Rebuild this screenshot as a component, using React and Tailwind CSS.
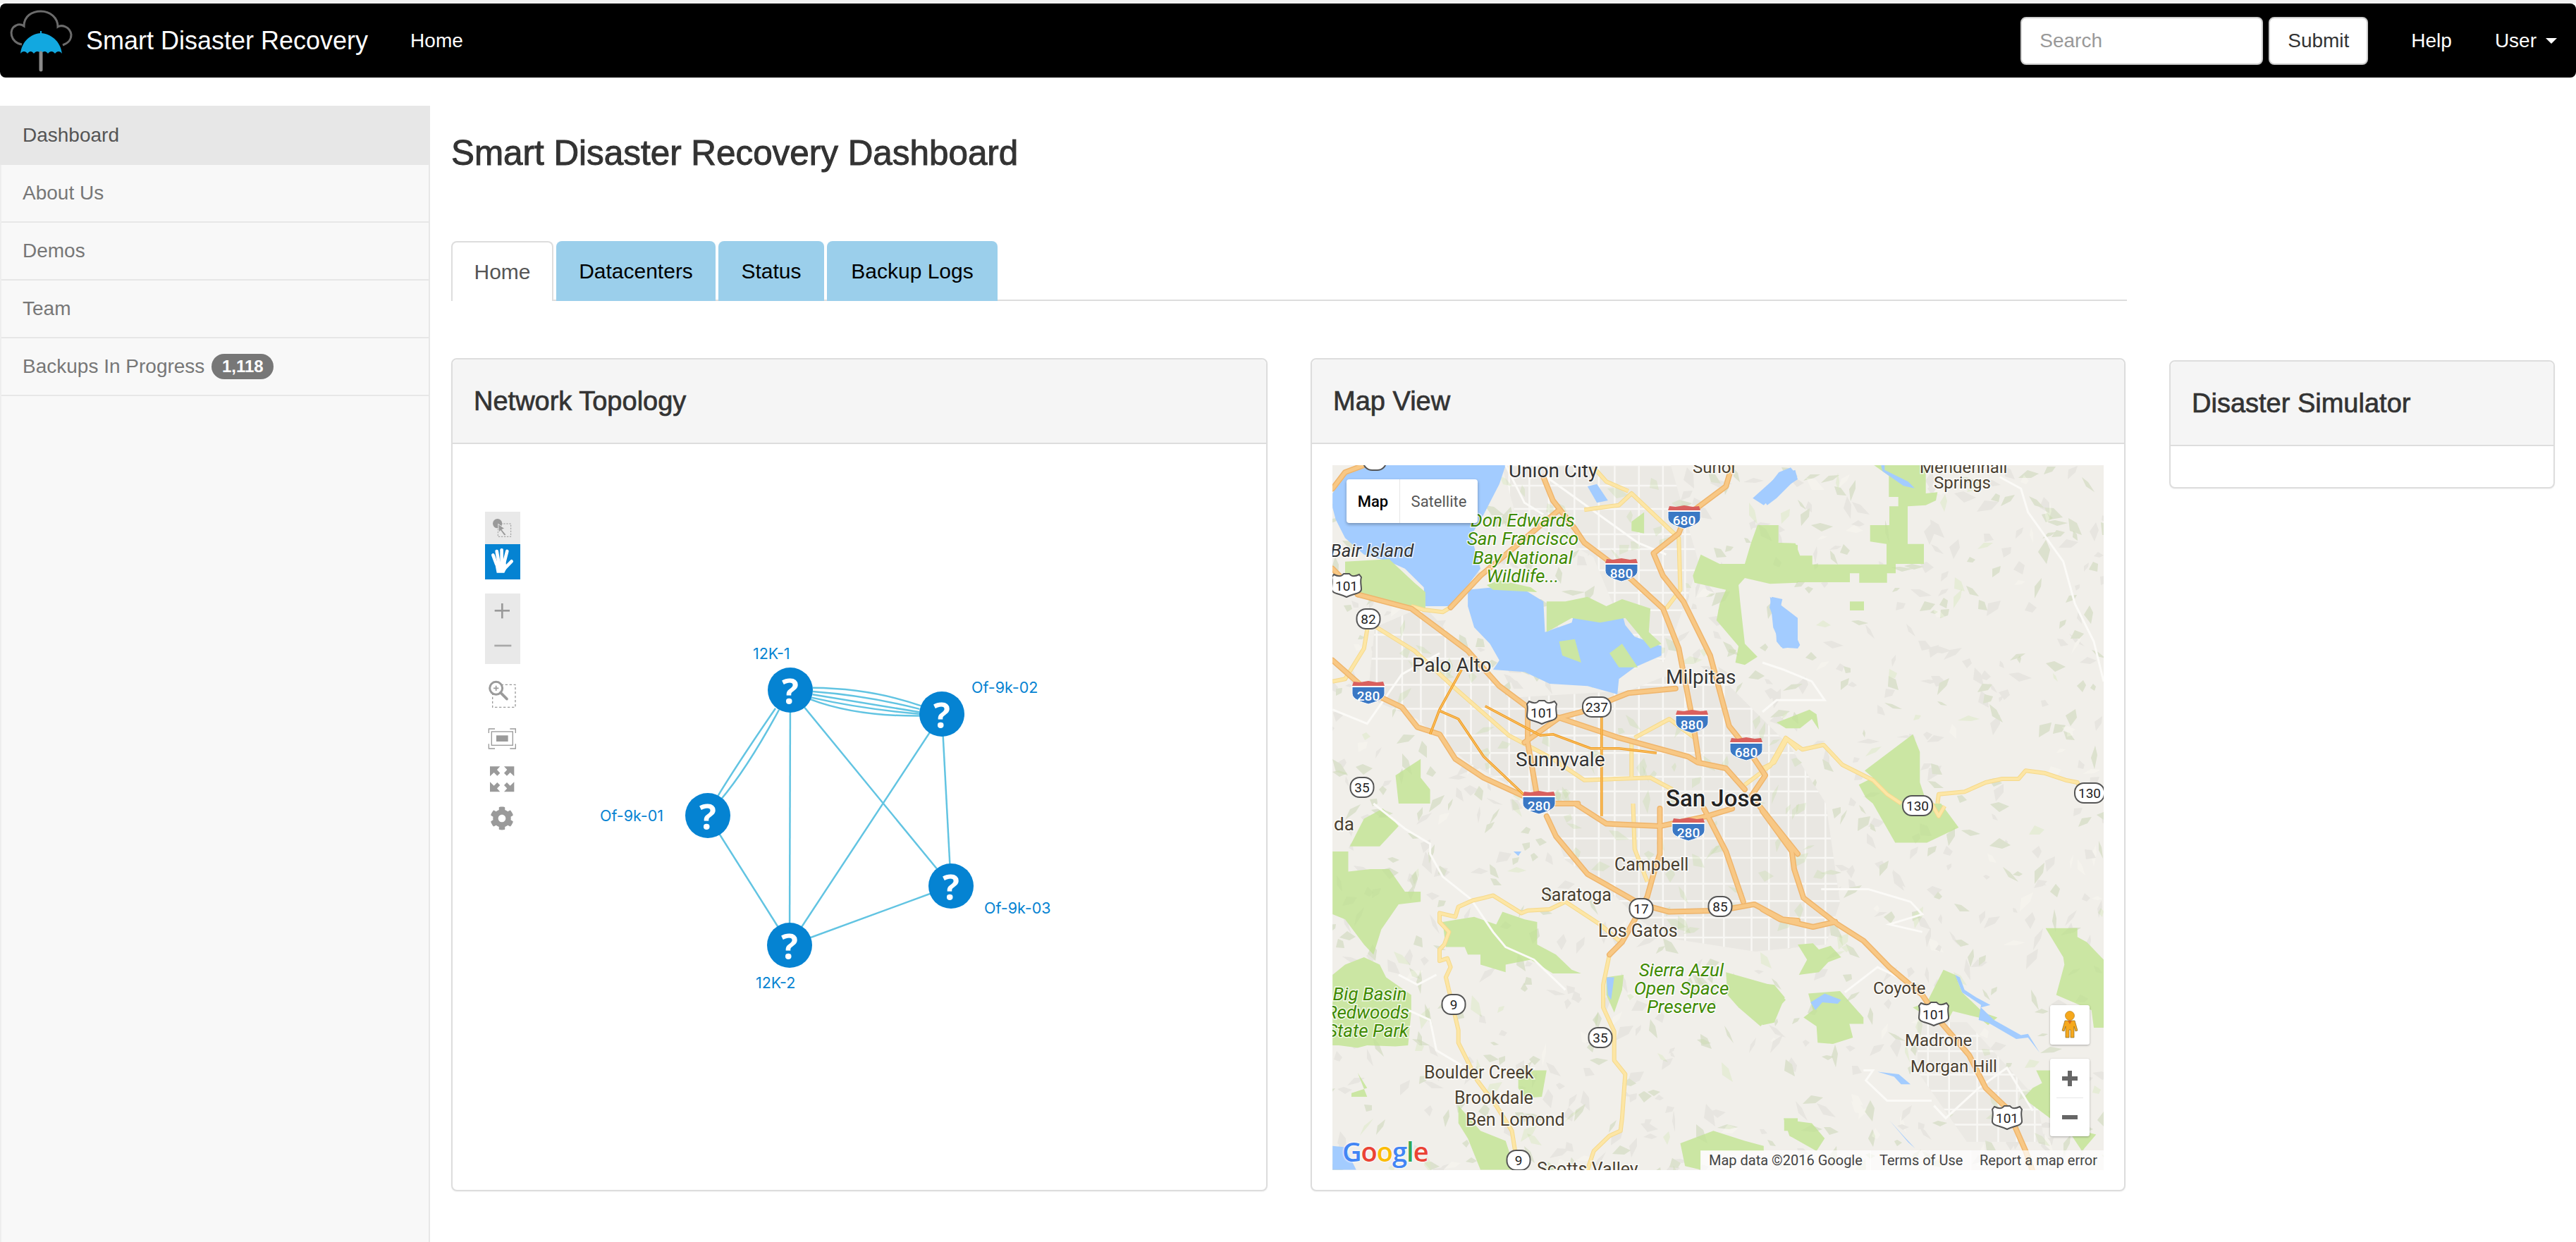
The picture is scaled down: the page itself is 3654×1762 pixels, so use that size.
import { FaCog } from "react-icons/fa";

// the zoom crops were not scaled evenly, so the map shapes are noted in crop coordinates and converted here
const toMap = (s, sx, ox, sy, oy) =>
    s
        .split(" ")
        .map((p) => {
            const [x, y] = p.split(",");
            return `${(x * sx + ox).toFixed(1)},${(y * sy + oy).toFixed(1)}`;
        })
        .join(" ");
const z6 = (s) => toMap(s, 1 / 2.24, -40, 1 / 3, -40);
const z7 = (s) => toMap(s, 1 / 2.24, -40, 1 / 2.8, 480);
const z8 = (s) => toMap(s, 1 / 3, 610, 1 / 3, -40);
const z9 = (s) => toMap(s, 1 / 3, 610, 1 / 2.8, 480);

const water = [
    z6("90,240 130,150 190,120 640,120 620,200 570,330 530,420 560,560 470,720 385,720 380,640 320,560 270,530 190,500 130,430 100,350 90,300"),
    z6("520,650 600,640 700,650 760,700 765,830 850,790 860,740 920,770 1010,750 1020,800 1050,850 1135,890 1135,930 1050,980 1000,1030 995,1095 900,1060 780,1050 700,1000 600,990 620,950 590,880 540,810 520,720"),
    z6("1425,260 1500,170 1560,140 1568,180 1500,240 1460,290"),
    z6("1480,680 1568,770 1568,890 1520,900 1490,810"),
    z6("900,210 930,200 965,270 930,280"),
    z7("90,1360 130,1365 165,1455 90,1455"),
    z7("960,690 985,690 975,780 965,760"),
    z7("665,190 690,190 680,208"),
    z8("0,240 70,150 120,130 145,160 135,185 60,260 20,290 0,260"),
    z8("505,120 520,120 520,140 620,190 648,218 600,208 510,145"),
    z8("40,680 85,690 70,755 120,760 135,830 160,885 150,900 80,895 60,870 55,790 30,725"),
    z9("820,680 840,690 860,740 910,770 970,800 930,810 985,860 1100,920 1130,915 1180,990 1130,930 1080,935 960,870 920,860 930,800 850,750"),
    z9("205,790 265,755 335,780 320,795 255,790 225,820"),
    z9("490,1065 580,1075 630,1115 590,1115 560,1085"),
    z9("540,1258 610,1330 650,1370 620,1345"),
];

// salt marsh sits on top of the bay
const marsh = [
    z6("130,530 270,520 350,620 385,660 385,730 340,720 220,690 130,640"),
    z6("770,700 830,700 900,680 960,720 1010,690 1100,730 1095,830 1135,880 1100,900 1020,770 940,790 850,770 770,830"),
    z6("810,870 860,860 880,960 820,930"),
    z6("970,920 1010,880 1060,980 1000,980"),
    z6("580,630 620,610 720,640 740,660 600,650"),
];

const parks = [
    z6("1260,500 1320,540 1400,540 1420,450 1440,375 1505,375 1505,450 1568,460 1568,620 1480,625 1400,600 1380,630 1385,700 1400,880 1440,935 1400,970 1370,960 1380,890 1310,780 1320,710 1340,650 1240,620 1235,590"),
    z6("1040,360 1080,320 1080,410 1040,400"),
    z6("290,1440 370,1370 370,1450 400,1500 400,1560 300,1560"),
    z7("90,190 140,190 140,270 210,260 270,260 320,350 370,350 370,390 300,400 245,500 220,600 190,560 130,460 90,440"),
    z7("145,170 190,60 250,20 300,90 240,170"),
    z7("90,680 130,640 190,610 240,640 260,690 340,760 340,830 330,960 290,965 200,960 170,970 110,960 90,960"),
    z7("440,470 490,460 540,450 610,480 630,430 700,460 740,470 740,560 800,600 850,660 880,675 790,675 720,620 640,640 640,670 560,640 560,600 520,600 510,570 450,570"),
    z7("1340,670 1480,720 1530,780 1450,885 1380,810 1345,760"),
    z7("960,690 1015,680 1010,740 985,830 960,760"),
    z7("680,1060 770,1060 755,1165 700,1170 680,1130"),
    z7("490,1200 560,1300 640,1340 670,1455 560,1455 520,1330 490,1270"),
    z7("1195,1350 1300,1300 1400,1340 1460,1360 1460,1380 1260,1380 1260,1455 1210,1440"),
    z7("1525,1250 1568,1250 1568,1300 1525,1300"),
    z7("150,1150 200,1130 170,1070 200,1165 150,1165"),
    z8("475,120 695,120 695,240 745,235 738,270 695,290 618,295 618,455 687,455 687,540 567,540 567,580 530,580 530,620 412,620 412,580 372,580 372,618 100,618 0,612 0,375 68,375 68,450 140,452 160,505 212,505 212,542 528,542 528,455 458,445 458,375 540,375 540,295 578,295 578,255 538,255 538,165"),
    z8("372,700 432,700 432,738 372,738"),
    z8("640,1265 670,1340 670,1470 700,1560 470,1560 440,1535 410,1480 470,1450 435,1420"),
    z8("60,1215 200,1160 230,1180 240,1245 210,1200 160,1240 100,1240"),
    z9("470,0 760,0 835,95 700,155 565,155"),
    z9("150,560 215,555 240,580 290,565 335,610 280,630 240,670 155,680 190,620"),
    z9("0,715 50,720 95,770 50,870 0,880"),
    z9("195,755 330,745 430,850 430,875 370,875 385,930 300,955 235,950 230,885 175,850 215,820"),
    z9("1205,495 1340,495 1340,530 1380,550 1452,620 1452,890 1410,890 1400,820 1250,760 1285,640 1280,610"),
    z9("1165,1060 1230,1060 1230,1270 1420,1315 1360,1380 1310,1310 1110,1170 1150,1130 1190,1110"),
    z9("90,1250 130,1260 210,1270 265,1330 230,1380 115,1320"),
    z9("770,660 820,680 850,750 940,830 1000,850 960,880 920,850 810,825 790,860 690,840 640,810 700,790"),
];

const highways = [
    z6("1360,120 1340,210 1210,340 1190,410 1110,495 1140,590 1205,700 1290,930 1350,1230 1410,1330 1465,1440 1420,1530"),
    z6("760,170 790,270 860,390 890,450 1010,570 1140,730 1190,900 1235,1210 1255,1385"),
    z6("170,670 340,730 520,910 620,1060 710,1150 810,1195 1000,1280 1220,1360 1250,1385 1340,1410 1400,1500"),
    z6("90,950 200,1080 310,1150 360,1235 430,1265 480,1370 570,1450 700,1530 760,1560 870,1560"),
    z6("1180,1070 1030,1090 880,1170 810,1195 700,1300"),
    z6("90,220 130,150 190,120"),
    z6("90,560 170,670"),
    z6("465,725 560,590 810,310"),
    z6("710,1150 710,1300 740,1530"),
    z7("770,50 800,130 900,280 1070,400 1160,430 1320,425 1430,400 1520,460 1568,465"),
    z7("860,0 960,80 1130,90 1280,50 1360,20"),
    z7("1130,20 1130,200 1110,280 1090,370 1060,440 1010,550 970,600"),
    z7("1270,20 1340,190 1395,390"),
    z7("1440,0 1568,200"),
    z9("0,30 125,190 135,260 175,375 320,480 430,545 540,650 680,760 760,870 880,1000 950,1130 1040,1210 1120,1380 1150,1460"),
    z9("0,420 75,460 215,490 310,470"),
];

const yellowRoads = [
    z6("890,310 1000,290 1040,240 1190,430 1195,650 1150,730"),
    z6("1030,230 960,190 920,130"),
    z6("90,1040 130,1030 190,900 205,780"),
    z6("230,810 350,910 480,1070 650,1270 790,1370 890,1460 1100,1450 1170,1500"),
    z6("1050,1280 1160,1200 1240,1280"),
    z6("1040,1450 1040,1290"),
    z6("340,720 380,735 440,745 465,725"),
    z6("1400,1480 1480,1400 1530,1280 1568,1330"),
    z7("970,600 950,720 950,810 985,905 985,1020 1020,1075 1010,1250 1005,1300 970,1320 920,1380 900,1455"),
    z7("830,390 940,480 1005,550"),
    z7("830,390 780,420 710,425 690,435 600,365 570,375 535,385 490,410 480,450 430,435 430,470 460,510 445,560 430,580 430,625 455,615 465,650 450,690 490,900 490,950 550,1100 610,1200 660,1300 670,1380"),
    z7("1045,0 1050,180 1090,310"),
    z8("0,1410 50,1385 105,1285 170,1330 260,1310 340,1395 470,1460 530,1520 590,1560"),
    z8("745,1560 750,1520 860,1510 950,1470 1020,1455 1090,1455 1120,1420 1200,1430 1290,1460 1340,1470 1360,1510"),
    z9("720,0 750,50 775,10"),
];

const expressways = [
    z6("500,990 430,1160 400,1265"),
    z6("430,1165 490,1200 570,1360 700,1525"),
    z6("575,1145 750,1270 790,1265 910,1325 1000,1325 1120,1345"),
    z6("945,1190 945,1560"),
    z7("945,0 945,50"),
];

const whiteRoads = [
    z7("220,0 320,100 400,160 400,200 440,290 530,380 600,510 640,570 730,620 830,740"),
    z7("300,680 360,720 420,680"),
    z7("330,820 400,860 420,980 500,1040"),
    z6("90,1160 200,1220 310,1010 430,920"),
    z6("770,170 1060,450 1150,500"),
    z6("640,120 700,280 760,330"),
    z8("1010,170 1100,220 1130,320 1280,530 1330,710 1410,870 1452,1040"),
    z8("0,960 90,990 210,1040 265,1120 60,1120 0,1170"),
    z9("250,340 450,340 630,390 680,440 540,480 680,510"),
    z9("350,750 490,650 600,700"),
    z9("430,1060 470,1060 440,1100 530,1180 720,1180"),
    z9("730,1200 780,1250 920,1130 1040,1050 1150,1220"),
];

const urbanA = "60,230 130,200 250,330 420,320 470,300 560,310 650,400 700,480 720,620 700,680 600,690 470,670 430,640 390,600 330,560 300,480 190,420 120,360 50,330";
const urbanB = "240,0 480,0 520,140 470,280 420,250 370,130 260,70";
const urbanC = "830,790 900,790 1000,900 1010,960 900,960 830,860";

// hill shading scattered over the terrain
const rnd = (() => {
    let s = 91;
    return () => {
        s = (s * 16807) % 2147483647;
        return s / 2147483647;
    };
})();
const flecks = Array.from({ length: 1100 }, () => {
    const x = rnd() * 1094;
    const y = rnd() * 1000;
    const len = 10 + rnd() * 24;
    const wid = 3 + rnd() * 8;
    const ang = rnd() * Math.PI;
    const dx = Math.cos(ang);
    const dy = Math.sin(ang);
    return [
        [x, y],
        [x + dx * len * 0.5 - dy * wid, y + dy * len * 0.5 + dx * wid],
        [x + dx * len, y + dy * len],
        [x + dx * len * 0.4 + dy * wid * 0.5, y + dy * len * 0.4 - dx * wid * 0.5],
    ]
        .map(([a, b]) => `${a.toFixed(0)},${b.toFixed(0)}`)
        .join(" ");
});

const gridLines = [];
let gy = 0;
while (gy < 1000) {
    gridLines.push([0, gy, 1094, gy]);
    gy += 20 + rnd() * 18;
}
let gx = 0;
while (gx < 1094) {
    gridLines.push([gx, 0, gx, 1000]);
    gx += 20 + rnd() * 20;
}

const mapLabels = [
    ["Union City", 250, 7, 28, "start", "#333", false, 400],
    ["Sunol", 511, 3, 24, "start", "#4a4030", false, 400],
    ["Mendenhall", 833, 3, 24, "start", "#4a4030", false, 400],
    ["Springs", 853, 25, 24, "start", "#4a4030", false, 400],
    ["Don Edwards", 270, 78, 26, "middle", "#3f8a02", true, 400],
    ["San Francisco", 270, 104, 26, "middle", "#3f8a02", true, 400],
    ["Bay National", 270, 131, 26, "middle", "#3f8a02", true, 400],
    ["Wildlife...", 270, 157, 26, "middle", "#3f8a02", true, 400],
    ["Bair Island", -3, 121, 26, "start", "#333", true, 400],
    ["Palo Alto", 113, 283, 28, "start", "#333", false, 400],
    ["Milpitas", 473, 300, 28, "start", "#333", false, 400],
    ["Sunnyvale", 260, 417, 28, "start", "#333", false, 400],
    ["San Jose", 473, 472, 33, "start", "#222", false, 500],
    ["da", 2, 509, 26, "start", "#4a4030", false, 400],
    ["Campbell", 400, 566, 25, "start", "#4a4030", false, 400],
    ["Saratoga", 296, 609, 25, "start", "#4a4030", false, 400],
    ["Los Gatos", 377, 660, 25, "start", "#4a4030", false, 400],
    ["Sierra Azul", 495, 716, 26, "middle", "#3f8a02", true, 400],
    ["Open Space", 495, 742, 26, "middle", "#3f8a02", true, 400],
    ["Preserve", 495, 768, 26, "middle", "#3f8a02", true, 400],
    ["Big Basin", 53, 750, 26, "middle", "#3f8a02", true, 400],
    ["Redwoods", 50, 776, 26, "middle", "#3f8a02", true, 400],
    ["State Park", 50, 802, 26, "middle", "#3f8a02", true, 400],
    ["Boulder Creek", 130, 861, 25, "start", "#4a4030", false, 400],
    ["Brookdale", 173, 897, 25, "start", "#4a4030", false, 400],
    ["Ben Lomond", 189, 928, 25, "start", "#4a4030", false, 400],
    ["Scotts Valley", 290, 998, 25, "start", "#4a4030", false, 400],
    ["Coyote", 767, 742, 24, "start", "#4a4030", false, 400],
    ["Madrone", 812, 816, 24, "start", "#4a4030", false, 400],
    ["Morgan Hill", 820, 853, 24, "start", "#4a4030", false, 400],
];

const interstates = [
    ["680", 499, 73],
    ["880", 410, 148],
    ["280", 51, 322],
    ["880", 510, 363],
    ["680", 587, 402],
    ["280", 293, 478],
    ["280", 505, 516],
];
const usRoutes = [
    ["101", 20, 170],
    ["101", 297, 350],
    ["101", 853, 778],
    ["101", 957, 925],
];
const stateRoutes = [
    ["82", 51, 218, 33],
    ["237", 375, 343, 40],
    ["35", 42, 457, 33],
    ["17", 438, 629, 33],
    ["85", 550, 626, 33],
    ["9", 172, 765, 33],
    ["35", 380, 812, 33],
    ["9", 264, 986, 33],
    ["130", 830, 483, 42],
    ["130", 1074, 465, 42],
    ["72", 60, -7, 33],
];

const roboto = "font-['Roboto',sans-serif]";

const InterstateShield = ({ label, x, y }) => (
    <g transform={`translate(${x} ${y})`}>
        <path d="M-23,-9 L23,-9 L23,2 C23,10 10,14 0,17 C-10,14 -23,10 -23,2 Z" fill="#3b78c4" stroke="#fff" strokeWidth="1" />
        <path d="M-23,-9 L-21,-15 L-12,-14 L0,-16 L12,-14 L21,-15 L23,-9 Z" fill="#d9605e" />
        <rect x="-23" y="-9" width="46" height="2" fill="#fff" />
        <text x="0" y="5" textAnchor="middle" dominantBaseline="central" fontSize="19" fontWeight="500" fill="#fff" className={roboto}>
            {label}
        </text>
    </g>
);

const UsShield = ({ label, x, y }) => (
    <g transform={`translate(${x} ${y})`}>
        <path d="M-18,-15 C-12,-12 -7,-12 -4,-16 L4,-16 C7,-12 12,-12 18,-15 L21,-11 C19,-5 21,0 21,6 C21,12 10,12 0,17 C-10,12 -21,12 -21,6 C-21,0 -19,-5 -21,-11 Z" fill="#fff" stroke="#555" strokeWidth="2" />
        <text x="0" y="1" textAnchor="middle" dominantBaseline="central" fontSize="19" fill="#222" className={roboto}>
            {label}
        </text>
    </g>
);

const StateShield = ({ label, x, y, w }) => (
    <g transform={`translate(${x} ${y})`}>
        <rect x={-w / 2} y="-14" width={w} height="28" rx="13" fill="#fff" stroke="#555" strokeWidth="2" />
        <text x="0" y="0" textAnchor="middle" dominantBaseline="central" fontSize="19" fill="#222" className={roboto}>
            {label}
        </text>
    </g>
);

const MapDrawing = () => (
    <svg width="1094" height="1000" viewBox="0 0 1094 1000" className="block">
        <defs>
            <clipPath id="urban-clip">
                <polygon points={urbanA} />
                <polygon points={urbanB} />
                <polygon points={urbanC} />
            </clipPath>
        </defs>
        <rect width="1094" height="1000" fill="#f1efea" />
        {flecks.map((f, i) => (
            <polygon key={i} points={f} fill={i % 6 === 0 ? "#f5f3ed" : "#e7e5e0"} />
        ))}
        <polygon points={urbanA} fill="#e9e7e2" />
        <polygon points={urbanB} fill="#ebe9e4" />
        <polygon points={urbanC} fill="#ebe9e4" />
        <g clipPath="url(#urban-clip)" stroke="#f8f7f4" strokeWidth="2.5">
            {gridLines.map(([x1, y1, x2, y2], i) => (
                <line key={i} x1={x1} y1={y1} x2={x2} y2={y2} />
            ))}
        </g>
        {parks.map((p, i) => (
            <polygon key={i} points={p} fill="#cbe6a3" />
        ))}
        {flecks.slice(0, 500).map((f, i) => (
            <polygon key={i} points={f} fill="#bcd996" opacity="0.25" />
        ))}
        {water.map((p, i) => (
            <polygon key={i} points={p} fill="#a3ccff" />
        ))}
        {marsh.map((p, i) => (
            <polygon key={i} points={p} fill="#cbe6a3" />
        ))}
        {whiteRoads.map((p, i) => (
            <polyline key={i} points={p} fill="none" stroke="#fbfaf7" strokeWidth="3" />
        ))}
        {yellowRoads.map((p, i) => (
            <polyline key={i} points={p} fill="none" stroke="#f5d98c" strokeWidth="6" strokeLinejoin="round" />
        ))}
        {yellowRoads.map((p, i) => (
            <polyline key={i} points={p} fill="none" stroke="#fde6a5" strokeWidth="4" strokeLinejoin="round" />
        ))}
        {highways.map((p, i) => (
            <polyline key={i} points={p} fill="none" stroke="#efb56c" strokeWidth="8" strokeLinejoin="round" strokeLinecap="round" />
        ))}
        {highways.map((p, i) => (
            <polyline key={i} points={p} fill="none" stroke="#f8c885" strokeWidth="5" strokeLinejoin="round" strokeLinecap="round" />
        ))}
        {expressways.map((p, i) => (
            <polyline key={i} points={p} fill="none" stroke="#f09c20" strokeWidth="3.5" strokeLinejoin="round" />
        ))}
        {expressways.map((p, i) => (
            <polyline key={i} points={p} fill="none" stroke="#fcc56e" strokeWidth="1.2" strokeLinejoin="round" />
        ))}
        {mapLabels.map(([text, x, y, size, anchor, color, italic, weight]) => (
            <text
                key={text + x}
                x={x}
                y={y}
                fontSize={size}
                textAnchor={anchor}
                dominantBaseline="central"
                fill={color}
                fontStyle={italic ? "italic" : "normal"}
                fontWeight={weight}
                stroke="#fff"
                strokeOpacity="0.75"
                strokeWidth="3"
                className={`${roboto} [paint-order:stroke]`}
            >
                {text}
            </text>
        ))}
        {interstates.map(([l, x, y]) => (
            <InterstateShield key={l + x} label={l} x={x} y={y} />
        ))}
        {usRoutes.map(([l, x, y]) => (
            <UsShield key={l + x} label={l} x={x} y={y} />
        ))}
        {stateRoutes.map(([l, x, y, w]) => (
            <StateShield key={l + x} label={l} x={x} y={y} w={w} />
        ))}
    </svg>
);

const MapView = () => (
    <div className="relative w-[1094px] h-[1000px] overflow-hidden">
        <MapDrawing />
        <div className={`absolute left-[20px] top-[20px] flex h-[62px] w-[186px] rounded-[4px] bg-white text-[22px] shadow-[0_2px_4px_rgba(0,0,0,0.3)] ${roboto}`}>
            <div className="flex w-[76px] items-center justify-center border-r border-[#e6e6e6] font-medium text-black">Map</div>
            <div className="flex flex-1 items-center justify-center text-[#565656]">Satellite</div>
        </div>
        <div className="absolute left-[14px] top-[951px] font-['Open_Sans',sans-serif] text-[38px] font-semibold leading-[44px] tracking-[-1px] [text-shadow:0_0_3px_#fff,0_0_3px_#fff]">
            <span className="text-[#4285f4]">G</span>
            <span className="text-[#ea4335]">o</span>
            <span className="text-[#fbbc05]">o</span>
            <span className="text-[#4285f4]">g</span>
            <span className="text-[#34a853]">l</span>
            <span className="text-[#ea4335]">e</span>
        </div>
        <div className="absolute left-[1018px] top-[766px] flex h-[56px] w-[56px] items-center justify-center rounded-[3px] bg-white shadow-[0_1px_3px_rgba(0,0,0,0.3)]">
            <svg width="24" height="40" viewBox="0 0 24 40">
                <circle cx="12" cy="7" r="6.5" fill="#f6a81c" stroke="#a97512" strokeWidth="0.6" />
                <path d="M5,14 L19,14 L23,28 L20,29 L18,22 L18,38 L13,38 L13,27 L11,27 L11,38 L6,38 L6,22 L4,29 L1,28 Z" fill="#f6a81c" stroke="#8a6a20" strokeWidth="0.7" />
                <path d="M9,14 L15,14 L12,19 Z" fill="#d9691a" />
            </svg>
        </div>
        <div className="absolute left-[1018px] top-[842px] flex h-[110px] w-[56px] flex-col items-center rounded-[3px] bg-white shadow-[0_1px_3px_rgba(0,0,0,0.3)]">
            <div className="flex h-[55px] items-center justify-center">
                <svg width="22" height="22" viewBox="0 0 22 22">
                    <path d="M8,0 H14 V8 H22 V14 H14 V22 H8 V14 H0 V8 H8 Z" fill="#666" />
                </svg>
            </div>
            <div className="h-px w-[38px] bg-[#e6e6e6]" />
            <div className="flex h-[54px] items-center justify-center">
                <div className="h-[6px] w-[22px] bg-[#666]" />
            </div>
        </div>
        <div className={`absolute bottom-0 right-0 flex h-[28px] w-[572px] items-center bg-white/70 text-[20px] text-[#444] ${roboto}`}>
            <span className="ml-[12px] w-[229px] whitespace-nowrap">Map data ©2016 Google</span>
            <span className="h-full w-px bg-white/80" />
            <span className="ml-[12px] w-[129px] whitespace-nowrap">Terms of Use</span>
            <span className="h-full w-px bg-white/80" />
            <span className="ml-[12px] whitespace-nowrap">Report a map error</span>
        </div>
    </div>
);

const nodes = [
    { x: 1121, y: 979, label: "12K-1", lx: 1068, ly: 927 },
    { x: 1336, y: 1013, label: "Of-9k-02", lx: 1378, ly: 975 },
    { x: 1004, y: 1157, label: "Of-9k-01", lx: 851, ly: 1157 },
    { x: 1349, y: 1257, label: "Of-9k-03", lx: 1396, ly: 1288 },
    { x: 1120, y: 1341, label: "12K-2", lx: 1072, ly: 1394 },
];
const links = [
    [0, 4],
    [0, 3],
    [1, 4],
    [1, 3],
    [2, 4],
    [4, 3],
];

const Toolbar = () => (
    <g transform="translate(660 700) scale(0.3333)">
        <rect x="84" y="78" width="150" height="138" fill="#e9e9e9" />
        <circle cx="137" cy="128" r="20" fill="#9a9a9a" />
        <rect x="139" y="129" width="55" height="55" fill="none" stroke="#9a9a9a" strokeWidth="3" strokeDasharray="7 5" />
        <path d="M140,130 L168,150 L156,154 L174,176 L166,180 L150,158 L142,166 Z" fill="#9a9a9a" stroke="#e9e9e9" strokeWidth="3" />
        <rect x="84" y="216" width="150" height="150" fill="#0583d2" />
        <g stroke="#fff" strokeWidth="14" strokeLinecap="round">
            <line x1="118" y1="262" x2="132" y2="300" />
            <line x1="134" y1="246" x2="142" y2="292" />
            <line x1="155" y1="241" x2="155" y2="292" />
            <line x1="178" y1="246" x2="166" y2="292" />
            <line x1="197" y1="289" x2="165" y2="322" />
        </g>
        <path d="M125,290 L172,290 L176,318 L166,338 L134,338 Z" fill="#fff" />
        <rect x="84" y="426" width="150" height="300" fill="#e9e9e9" />
        <rect x="125" y="495" width="64" height="8" fill="#9a9a9a" />
        <rect x="153" y="468" width="8" height="64" fill="#9a9a9a" />
        <rect x="124" y="644" width="72" height="8" fill="#a8a8a8" />
        <rect x="116" y="814" width="97" height="96" fill="none" stroke="#9a9a9a" strokeWidth="4" strokeDasharray="10 8" />
        <circle cx="131" cy="829" r="27" fill="#fff" stroke="#9a9a9a" strokeWidth="9" />
        <line x1="150" y1="848" x2="177" y2="875" stroke="#9a9a9a" strokeWidth="11" strokeLinecap="round" />
        <path d="M120,829 H142 M131,818 V840" stroke="#9a9a9a" strokeWidth="5" />
        <path d="M100,1020 V1002 H126 M190,1002 H214 V1020 M100,1066 V1086 H126 M190,1086 H214 V1066" fill="none" stroke="#9a9a9a" strokeWidth="4" />
        <rect x="112" y="1014" width="90" height="58" fill="none" stroke="#9a9a9a" strokeWidth="4" />
        <rect x="132" y="1030" width="50" height="26" fill="#9a9a9a" />
        <g fill="#9a9a9a">
            <polygon points="105,1162 148,1162 135,1176 148,1190 136,1202 122,1188 105,1204" />
            <polygon points="208,1162 165,1162 178,1176 165,1190 177,1202 191,1188 208,1204" />
            <polygon points="105,1270 148,1270 135,1256 148,1242 136,1230 122,1244 105,1228" />
            <polygon points="208,1270 165,1270 178,1256 165,1242 177,1230 191,1244 208,1228" />
        </g>
    </g>
);

const Topology = () => (
    <svg width="1154" height="1058" viewBox="642 630 1154 1058" className="block">
        <Toolbar />
        <FaCog x="695" y="1144" size={34} color="#9a9a9a" />
        <g stroke="#62c4e2" strokeWidth="2.5" fill="none">
            {links.map(([a, b]) => (
                <line key={`${a}-${b}`} x1={nodes[a].x} y1={nodes[a].y} x2={nodes[b].x} y2={nodes[b].y} />
            ))}
            <path d="M1100,1005 Q1045,1085 1016,1133" />
            <path d="M1105,1007 Q1060,1090 1022,1135" />
            <g transform="translate(820 880) scale(0.4464 0.3448)">
                <path vectorEffect="non-scaling-stroke" d="M745,278 Q930,280 1090,352" />
                <path vectorEffect="non-scaling-stroke" d="M745,293 Q920,310 1085,365" />
                <path vectorEffect="non-scaling-stroke" d="M745,305 Q910,340 1085,378" />
                <path vectorEffect="non-scaling-stroke" d="M742,318 Q900,365 1085,385" />
                <path vectorEffect="non-scaling-stroke" d="M738,325 Q880,395 1085,393" />
            </g>
        </g>
        {nodes.map((n) => (
            <g key={n.label}>
                <circle cx={n.x} cy={n.y} r="32" fill="#0583d2" />
                <text x={n.x} y={n.y + 1} textAnchor="middle" dominantBaseline="central" fontSize="50" fontWeight="700" fill="#fff" className="font-['Open_Sans',sans-serif]">
                    ?
                </text>
                <text x={n.lx} y={n.ly} dominantBaseline="central" fontSize="21.5" fill="#0583d2" className="font-['Inter',sans-serif]">
                    {n.label}
                </text>
            </g>
        ))}
    </svg>
);

const Panel = ({ title, className, children }) => (
    <div className={`rounded-lg border-2 border-[#dddddd] bg-white shadow-[0_1px_2px_rgba(0,0,0,0.05)] ${className}`}>
        <div className="flex h-[120px] items-center rounded-t-lg border-b-2 border-[#dddddd] bg-[#f5f5f5] pl-[30px] text-[38px] text-[#333] [-webkit-text-stroke:0.7px]">
            {title}
        </div>
        {children}
    </div>
);

const sideItems = ["About Us", "Demos", "Team"];

export default function App() {
    return (
        <div className="min-h-[1762px] border-t-[5px] border-[#f1f1f1] bg-white font-['Liberation_Sans',Arial,sans-serif] text-[28px] text-[#333]">
            <nav className="flex h-[105px] items-center rounded-lg bg-black pr-[27px] text-white">
                <svg width="90" height="88" viewBox="0 0 90 88" className="ml-[13px] shrink-0">
                    <g transform="translate(-12 -15)">
                        <path d="M30,64 C14,62 10,42 22,37 C26,35 30,36 33,38 C33,24 44,17 57,17 C70,17 81,26 81,39 C86,36 98,38 100,50 C100,58 96,62 88,65" fill="none" stroke="#6b6b6b" strokeWidth="3" />
                        <path d="M28,77 C30,60 42,49 57,48 C72,49 85,60 87,77 C84,73 80,73 77,77 C74,73 70,73 67,77 C64,73 61,73 57,77 C54,73 50,73 47,77 C44,73 41,73 38,77 C35,73 31,73 28,77 Z" fill="#12a8e0" />
                        <rect x="56" y="45" width="2" height="5" fill="#12a8e0" />
                        <line x1="57" y1="76" x2="57" y2="100" stroke="#8a8a8a" strokeWidth="5" strokeLinecap="round" />
                    </g>
                </svg>
                <span className="ml-[19px] whitespace-nowrap text-[36px]">Smart Disaster Recovery</span>
                <a className="ml-[60px]">Home</a>
                <div className="ml-auto flex items-center">
                    <input
                        placeholder="Search"
                        className="h-[68px] w-[344px] rounded-lg border-2 border-[#cccccc] bg-white pl-[25px] text-[#333] outline-none placeholder:text-[#999]"
                    />
                    <button className="ml-[8px] h-[68px] w-[141px] rounded-lg border-2 border-[#cccccc] bg-white text-[#333]">Submit</button>
                    <a className="ml-[61px]">Help</a>
                    <a className="ml-[61px]">User</a>
                    <span className="ml-[13px] h-0 w-0 border-x-[8px] border-t-[8px] border-x-transparent border-t-white" />
                </div>
            </nav>

            <div className="mt-[40px] flex items-stretch">
                <aside className="min-h-[1612px] w-[610px] shrink-0 border-x-2 border-l-[#eeeeee] border-r-[#e7e7e7] bg-[#f8f8f8] text-[#777]">
                    <div className="-ml-[2px] flex h-[84px] items-center bg-[#e7e7e7] pl-[32px] text-[#555]">Dashboard</div>
                    {sideItems.map((item) => (
                        <div key={item} className="flex h-[82px] items-center border-b-2 border-[#e7e7e7] pl-[30px]">
                            {item}
                        </div>
                    ))}
                    <div className="flex h-[82px] items-center border-b-2 border-[#e7e7e7] pl-[30px]">
                        Backups In Progress
                        <span className="ml-[10px] flex h-[36px] w-[88px] items-center justify-center rounded-[18px] bg-[#777] text-[24px] font-bold text-white">1,118</span>
                    </div>
                </aside>

                <main className="pl-[30px]">
                    <h1 className="mb-[98px] mt-[40px] whitespace-nowrap text-[49.4px] leading-[54px] text-[#333] [-webkit-text-stroke:1px]">
                        Smart Disaster Recovery Dashboard
                    </h1>

                    <div className="flex h-[85px] w-[2377px] gap-[4px] border-b-2 border-[#dddddd] text-[30px]">
                        <div className="flex h-[85px] w-[145px] items-center justify-center rounded-t-lg border-2 border-b-0 border-[#dddddd] bg-white text-[#555]">Home</div>
                        <div className="flex h-[85px] w-[226px] items-center justify-center rounded-t-lg bg-[#9bcfeb] text-black">Datacenters</div>
                        <div className="flex h-[85px] w-[150px] items-center justify-center rounded-t-lg bg-[#9bcfeb] text-black">Status</div>
                        <div className="flex h-[85px] w-[242px] items-center justify-center rounded-t-lg bg-[#9bcfeb] text-black">Backup Logs</div>
                    </div>

                    <div className="mt-[81px] flex items-start">
                        <Panel title="Network Topology" className="h-[1182px] w-[1158px]">
                            <Topology />
                        </Panel>
                        <Panel title="Map View" className="ml-[61px] h-[1182px] w-[1156px]">
                            <div className="px-[29px] pt-[30px]">
                                <MapView />
                            </div>
                        </Panel>
                        <Panel title="Disaster Simulator" className="ml-[62px] mt-[3px] h-[182px] w-[547px]" />
                    </div>
                </main>
            </div>
        </div>
    );
}
